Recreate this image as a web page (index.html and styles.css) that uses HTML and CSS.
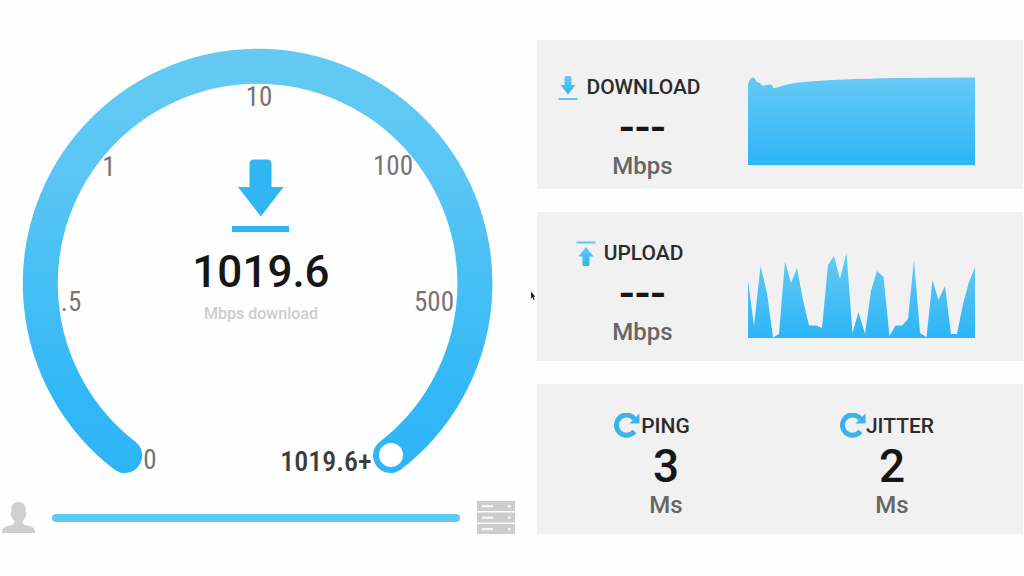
FILE: index.html
```html
<!DOCTYPE html>
<html lang="en">
<head>
<meta charset="utf-8">
<meta name="viewport" content="width=device-width, initial-scale=1">
<title>Speed test</title>
<link rel="stylesheet" href="styles.css">
</head>
<body>
<svg class="defs" width="0" height="0" aria-hidden="true">
  <defs>
    <linearGradient id="sky" x1="0" y1="0" x2="0" y2="1">
      <stop offset="0" stop-color="#66caf4"/>
      <stop offset="1" stop-color="#2cb5f6"/>
    </linearGradient>
    <linearGradient id="dial" gradientUnits="userSpaceOnUse" x1="0" y1="8" x2="0" y2="434">
      <stop offset="0" stop-color="#65caf2"/>
      <stop offset="0.3" stop-color="#5ac6f4"/>
      <stop offset="0.8" stop-color="#33b8f6"/>
      <stop offset="1" stop-color="#2eb5f6"/>
    </linearGradient>
  </defs>
</svg>
<main class="page">
  <section class="test" aria-label="Current test">
    <div class="gauge">
      <svg class="dial" viewBox="0 0 515 450">
        <path d="M124.7 415.5A217.3 217.3 0 1 1 390.5 415.5" fill="none" stroke="url(#dial)" stroke-width="35" stroke-linecap="round"/>
        <circle cx="391" cy="415" r="12" fill="#fff"/>
        <g class="ticks">
          <text x="150" y="429">0</text>
          <text x="71" y="271">.5</text>
          <text x="109" y="136">1</text>
          <text x="259" y="66">10</text>
          <text x="393" y="135">100</text>
          <text x="434" y="271">500</text>
        </g>
        <text class="peak" x="326" y="431">1019.6+</text>
      </svg>
      <div class="reading">
        <svg width="57" height="73" viewBox="0 0 57 73" fill="#31b6f3" aria-hidden="true">
          <path d="M22 0.500H35Q39.500 0.500 39.500 5V28H51.500L28.800 57.500L6 28H17.500V5Q17.500 0.500 22 0.500Z"/>
          <path d="M0 67H57V73H0Z"/>
        </svg>
        <div class="speed">1019.6</div>
        <div class="caption">Mbps download</div>
      </div>
    </div>
    <div class="route">
      <svg width="33" height="32" viewBox="0 0 33 32" fill="#cfcfcf" aria-hidden="true">
        <path d="M16.500 0C21 0 23.800 3 23.600 7.500V10C25 10.500 24.600 14 23 15C22.600 17 21.500 18.300 20.500 19.500C20.500 21.500 21.500 22.300 23.500 23L29 24.500C32 25.500 33 27.500 33 31H0C0 27.500 1 25.500 4 24.500L9.500 23C11.500 22.300 12.500 21.500 12.500 19.500C11.500 18.300 10.400 17 10 15C8.400 14 8 10.500 9.400 10V7.500C9.200 3 12 0 16.500 0Z"/>
      </svg>
      <div class="line"></div>
      <svg width="38" height="33" viewBox="0 0 38 33" aria-hidden="true">
        <path fill="#cdcdcd" d="M0 0H38V10H0ZM0 11.500H38V21.500H0ZM0 23H38V33H0Z"/>
        <path fill="#f7f7f7" d="M5 4H16V6.200H5ZM5 15.500H16V17.700H5ZM5 27H16V29.200H5ZM31 4H33.500V6.500H31ZM31 15.500H33.500V18H31ZM31 27H33.500V29.500H31Z"/>
      </svg>
      <svg class="pointer" width="6" height="10" viewBox="0 0 6 10" aria-hidden="true">
        <path d="M1 0.500V7.500L2.400 6.300L3.500 9L4.700 8.500L3.600 6L5.200 5.500Z" fill="#222"/>
      </svg>
    </div>
  </section>

  <section class="results" aria-label="Results">
    <article class="card card-download">
      <div class="metric">
        <h2 class="name name-gap">
          <svg width="20" height="26" viewBox="0 0 20 26" aria-hidden="true">
            <path fill="url(#sky)" d="M8 2H12Q13.500 2 13.500 3.500V11H17.500L10 20.500L2.500 11H6.500V3.500Q6.500 2 8 2Z"/>
            <path fill="#62c4ee" d="M0.500 24H19.500V26H0.500Z"/>
          </svg>
          DOWNLOAD
        </h2>
        <div class="value">---</div>
        <div class="unit">Mbps</div>
      </div>
      <svg class="chart" height="88" viewBox="0 0 227 88" preserveAspectRatio="none" role="img" aria-label="Download speed over time">
        <path fill="url(#sky)" d="M0 88V9C1 4 2 1 5 0.500C8 1 7.500 5 10 5.500C13 5 12 8 15 8.500C18 8.500 19 7 23 7.500C25 8 24 11 26 11C30 10.500 38 7 50 5.500C80 2.500 110 2 150 1L227 0.500V88Z"/>
      </svg>
    </article>

    <article class="card card-upload">
      <div class="metric">
        <h2 class="name name-gap">
          <svg width="20" height="26" viewBox="0 0 20 26" aria-hidden="true">
            <path fill="#62c4ee" d="M0.500 1.500H19.500V3.500H0.500Z"/>
            <path fill="url(#sky)" d="M10 7L17.500 16.500H13.500V24.500Q13.500 26 12 26H8Q6.500 26 6.500 24.500V16.500H2.500Z"/>
          </svg>
          UPLOAD
        </h2>
        <div class="value">---</div>
        <div class="unit">Mbps</div>
      </div>
      <svg class="chart" height="85" viewBox="0 0 227 85" preserveAspectRatio="none" role="img" aria-label="Upload speed over time">
        <path fill="url(#sky)" d="M0 85V27L6 73L12.500 13L19 40L25 84.500L31 81L37 8L43 30L49 15L55 47L61 72.500H68L74 75L80 12L86 3L92 26L98.500 0L104.500 80L110.500 59L117 81L123 38L129 18L135.500 24L141.500 83L147.500 72.500H154L160 66L166 7L172 80L178.500 84L184.500 27L190.500 47L197 33L203 81H209L215 51L221 29L227 14V85Z"/>
      </svg>
    </article>

    <article class="card card-latency">
      <div class="metric">
        <h2 class="name name-ping">
          <svg width="26" height="26" viewBox="0 0 26 26" aria-hidden="true">
            <path d="M20.500 5.900A10.100 10.100 0 1 0 20.400 18.400" fill="none" stroke="#3bb3e8" stroke-width="5"/>
            <path d="M25.500 0.500V10.500H15.500Z" fill="#3bb3e8"/>
          </svg>
          PING
        </h2>
        <div class="value">3</div>
        <div class="unit">Ms</div>
      </div>
      <div class="metric">
        <h2 class="name name-jitter">
          <svg width="26" height="26" viewBox="0 0 26 26" aria-hidden="true">
            <path d="M20.500 5.900A10.100 10.100 0 1 0 20.400 18.400" fill="none" stroke="#3bb3e8" stroke-width="5"/>
            <path d="M25.500 0.500V10.500H15.500Z" fill="#3bb3e8"/>
          </svg>
          JITTER
        </h2>
        <div class="value">2</div>
        <div class="unit">Ms</div>
      </div>
    </article>
  </section>
</main>
</body>
</html>
```

FILE: styles.css
```css
* {
  box-sizing: border-box;
}

body {
  margin: 0;
  background: #fefefe;
  font-family: Roboto, "Liberation Sans", sans-serif;
  font-weight: 500;
}

svg {
  display: block;
  flex: none;
}

.defs {
  position: absolute;
}

.page {
  display: grid;
  grid-template-columns: 515fr 486fr;
  align-items: start;
  gap: 22px;
  padding: 40px 1px 0 0;
}

.gauge {
  display: grid;
}

.gauge > * {
  grid-area: 1 / 1;
}

.dial {
  width: 100%;
}

.ticks,
.peak {
  font-family: "Roboto Condensed", Roboto, sans-serif;
  text-anchor: middle;
}

.ticks {
  font-size: 27px;
  font-weight: 400;
  fill: #757575;
}

.peak {
  font-size: 28px;
  fill: #3c3c3c;
}

.reading {
  display: flex;
  flex-direction: column;
  align-items: center;
  place-self: center;
  padding: 0 0 48px 7px;
}

.speed {
  margin-top: 14px;
  font-size: 44px;
  line-height: 52px;
  color: #161616;
}

.caption {
  margin-top: 6px;
  font-size: 16px;
  line-height: 20px;
  color: #cdcdcd;
}

.route {
  position: relative;
  display: flex;
  align-items: center;
  gap: 17px;
  margin-top: 11px;
  padding-left: 2px;
}

.line {
  flex: 1;
  height: 8px;
  border-radius: 4px;
  background: #5fcaf2;
}

.pointer {
  position: absolute;
  right: -21px;
  bottom: 233px;
}

.results {
  display: grid;
  gap: 23px;
}

.card {
  display: flex;
  background: #f1f1f1;
}

.card-download {
  padding: 34px 48px 11px 0;
}

.card-upload {
  padding: 28px 48px 17px 0;
}

.card-latency {
  padding: 29px 18px 17px 16px;
}

.metric {
  flex: 1;
  display: flex;
  flex-direction: column;
  align-items: center;
}

.name {
  display: flex;
  align-items: center;
  margin: 0;
  font-size: 21px;
  font-weight: 500;
  line-height: 26px;
  color: #2b2b2b;
}

.name-gap {
  gap: 8px;
  margin-right: 26px;
}

.name-ping {
  gap: 1px;
  margin-right: 28px;
}

.name-jitter {
  margin-right: 10px;
}

.value {
  font-size: 46px;
  line-height: 54px;
  color: #161616;
}

.unit {
  font-size: 24px;
  line-height: 24px;
  color: #666;
}

.chart {
  width: 227px;
  align-self: flex-end;
}

.card-download .chart {
  margin-bottom: 13px;
}

.card-upload .chart {
  margin-bottom: 6px;
}
```
